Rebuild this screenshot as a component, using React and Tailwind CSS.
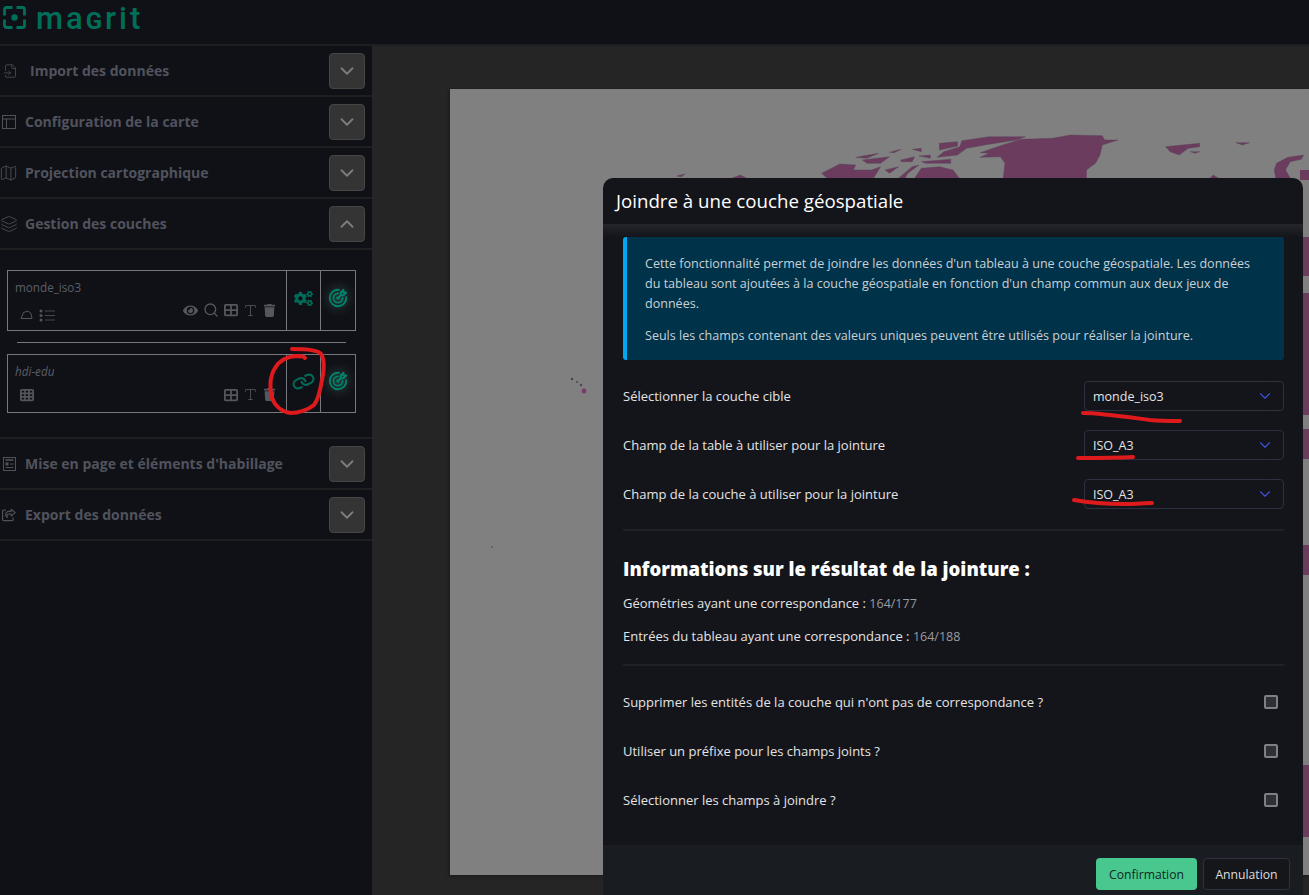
import { ChevronDown, ChevronUp, FileInput, Map as MapIcon, Layers, Search, Type, Link } from "lucide-react";
import { FaCogs, FaEye, FaTrash } from "react-icons/fa";
import { FaTableCells, FaTableCellsLarge, FaRegShareFromSquare } from "react-icons/fa6";
import { TbTargetArrow } from "react-icons/tb";

function SectionRow({ icon, label, open, labelClass = "ml-[7px]" }) {
  return (
    <div className="flex items-center h-[51px] border-b-2 border-[#1e1f21] pr-[7px]">
      <span className="w-[18px] flex justify-center text-[#50515a]">{icon}</span>
      <span className={"text-[14px] font-bold text-[#50535e] " + labelClass}>{label}</span>
      <button className="ml-auto w-[36px] h-[36px] rounded-[4px] bg-[#343434] border border-[#454545] flex items-center justify-center text-[#7d7d7d]">
        {open ? <ChevronUp size={22} strokeWidth={2} /> : <ChevronDown size={22} strokeWidth={2} />}
      </button>
    </div>
  );
}

function LayerCard({ name, italic, h, typeIcons, tools, action, rowClass, toolsClass }) {
  return (
    <div className={"flex mx-[7px] w-[349px] border border-[#77787c] " + h}>
      <div className="flex-1 min-w-0 flex flex-col justify-between pl-[7px] pr-[10px] pt-[8px]">
        <div className={"text-[11.7px] text-[#5b5e68] " + (italic ? "italic" : "")}>{name}</div>
        <div className={"flex items-center justify-between " + rowClass}>
          <div className="flex items-center gap-[6px] pl-[5px] text-[#54565e]">{typeIcons}</div>
          <div className={"flex items-center gap-[5px] text-[#55575f] " + toolsClass}>{tools}</div>
        </div>
      </div>
      <div className="w-[34px] pb-[5px] border-l border-[#77787c] flex items-center justify-center text-[#006b58]">{action}</div>
      <div className="w-[35px] pb-[5px] border-l border-[#77787c] flex items-center justify-center text-[#00836a]">
        <TbTargetArrow size={22} className="drop-shadow-[0_0_6px_rgba(120,200,180,0.45)]" />
      </div>
    </div>
  );
}

function Sidebar() {
  return (
    <aside className="w-[372px] shrink-0 bg-[#101116]">
      <SectionRow icon={<FileInput size={20} strokeWidth={1.2} className="ml-[3px]" />} label="Import des données" labelClass="ml-[12px]" />
      <SectionRow
        icon={
          <svg width="14" height="14" viewBox="0 0 14 14" fill="none" stroke="currentColor" strokeWidth="1" className="-ml-[1px]">
            <rect x="0.5" y="0.5" width="13" height="13" />
            <path d="M0.5 4H13.5M4.5 4V13.5" />
          </svg>
        }
        label="Configuration de la carte"
      />
      <SectionRow icon={<MapIcon size={20} strokeWidth={1.1} className="-ml-[1px]" />} label="Projection cartographique" />
      <SectionRow icon={<Layers size={18} strokeWidth={1.1} className="-ml-[1px]" />} label="Gestion des couches" open />
      <div className="h-[189px] border-b-2 border-[#1e1f21] pt-[20px]">
        <LayerCard
          name="monde_iso3"
          h="h-[61px]"
          rowClass="pb-[2px]"
          toolsClass="mb-[10px]"
          typeIcons={
            <>
              <svg width="13" height="10" viewBox="0 0 13 10" fill="none" stroke="currentColor" strokeWidth="1">
                <path d="M1 8.5 L3.5 2.5 L8 1 L11 3.5 L12 8.5 Z" />
              </svg>
              <svg width="16" height="13" viewBox="0 0 16 13" fill="none" stroke="currentColor" strokeWidth="0.8">
                <path d="M6 2H16M6 6.5H16M6 11H16" />
                <circle cx="2" cy="2" r="1.5" fill="currentColor" stroke="none" />
                <circle cx="2" cy="6.5" r="1.5" fill="currentColor" stroke="none" />
                <circle cx="2" cy="11" r="1.5" fill="currentColor" stroke="none" />
              </svg>
            </>
          }
          tools={
            <>
              <FaEye size={15} />
              <Search size={16} strokeWidth={2} />
              <FaTableCellsLarge size={14} />
              <Type size={15} strokeWidth={1.3} />
              <FaTrash size={13} />
            </>
          }
          action={<FaCogs size={19} />}
        />
        <div className="h-px bg-[#77787c] ml-[17px] w-[329px] my-[11px]" />
        <LayerCard
          name="hdi-edu"
          italic
          h="h-[59px]"
          rowClass="pb-[10px]"
          toolsClass=""
          typeIcons={<FaTableCells size={14} />}
          tools={
            <>
              <FaTableCellsLarge size={14} />
              <Type size={15} strokeWidth={1.3} />
              <FaTrash size={13} />
            </>
          }
          action={<Link size={21} strokeWidth={2.4} className="rotate-[20deg]" />}
        />
      </div>
      <SectionRow
        icon={
          <svg width="13" height="14" viewBox="0 0 13 14" fill="none" stroke="currentColor" strokeWidth="1">
            <rect x="0.5" y="0.5" width="12" height="13" />
            <path d="M2.5 3H10.5" strokeWidth="1.6" />
            <rect x="2.5" y="5.5" width="3" height="3" fill="currentColor" stroke="none" />
            <path d="M7 7H10.5M2.5 10.5H10.5" />
          </svg>
        }
        label="Mise en page et éléments d'habillage"
      />
      <SectionRow icon={<FaRegShareFromSquare size={14} />} label="Export des données" />
    </aside>
  );
}

// carte en fond, coordonnees page
function WorldMap() {
  const north = [
    "840,98 890,75 930,58 1000,55 1040,45 1110,47 1115,60 1145,60 1110,75 1105,105 1095,130 1075,150 1075,185 890,185 895,130 885,110 840,112 860,100",
    "800,62 860,50 940,50 920,60 850,75 810,85 790,105 745,112 760,95 795,80",
    "750,70 790,65 790,78 750,90",
    "490,160 530,132 565,135 560,150 600,150 620,140 600,185 510,185",
    "650,185 690,140 705,135 680,160 670,185",
    "690,185 710,145 750,140 780,150 800,185",
    "565,112 615,100 590,115",
    "580,120 640,110 620,130 590,130",
    "665,120 695,110 690,125 665,125",
    "710,125 775,118 775,130 720,130",
    "640,97 665,88 650,98",
    "690,88 710,85 710,95",
    "705,108 730,105 730,115",
    "630,150 660,140 640,160",
    "1250,80 1325,70 1325,80 1300,85 1280,105 1260,95",
    "1405,68 1435,68 1420,75",
    "1305,95 1325,95 1315,100",
    "1495,130 1520,112 1555,105 1550,118 1525,125 1515,150 1530,185 1495,185 1490,150",
    "1340,185 1355,165 1380,185",
    "170,168 188,162 180,170",
    "270,185 310,165 340,185",
  ];
  const strip = [
    [170, 180],
    [237, 276],
    [293, 415],
    [429, 459],
    [545, 575],
    [765, 837],
  ];
  return (
    <svg viewBox="450 89 859 786" className="w-[859px] h-[786px] block">
      <g transform="translate(600 120) scale(0.4525 0.3333)" fill="#6b3c5e" stroke="#55405a" strokeWidth="1" strokeLinejoin="round">
        {north.map((p) => (
          <polygon key={p} points={p} />
        ))}
      </g>
      {strip.map(([a, b]) => (
        <rect key={a} x="1300" y={a} width="9" height={b - a} fill="#6b3c5e" />
      ))}
      <circle cx="572" cy="379" r="1.2" fill="#444" />
      <circle cx="577" cy="382" r="1" fill="#55405a" />
      <circle cx="581" cy="385" r="1.2" fill="#55405a" />
      <circle cx="584" cy="391" r="2.4" fill="#7b3a6b" />
      <circle cx="492" cy="547" r="0.8" fill="#444" />
    </svg>
  );
}

function SelectRow({ label, value, className }) {
  return (
    <div className={"flex items-center justify-between h-[30px] " + className}>
      <span className="text-[13px] text-[#e4e4e6] pt-[2px]">{label}</span>
      <div className="w-[200px] h-[30px] border border-[#2e3040] rounded-[4px] flex items-center justify-between pl-[8px] pr-[9px]">
        <span className="text-[12.5px] text-[#e4e4e6] pt-[2px]">{value}</span>
        <ChevronDown size={18} strokeWidth={1.5} className="text-[#3e50d8]" />
      </div>
    </div>
  );
}

function CheckRow({ label }) {
  return (
    <div className="flex items-center justify-between h-[49px] pr-[6px]">
      <span className="text-[13px] text-[#e4e4e6]">{label}</span>
      <span className="w-[14px] h-[14px] mb-[2px] border-2 border-[#7f7f88] bg-[#2f2f38] rounded-[2px]" />
    </div>
  );
}

function Modal() {
  return (
    <div className="absolute left-[603px] top-[178px] bottom-0 w-[700px] rounded-t-[10px] bg-[#14151a] flex flex-col">
      <div className="h-[46px] shrink-0 flex items-center px-[13px] text-[18.7px] text-white">Joindre à une couche géospatiale</div>
      <div className="flex-1 bg-gradient-to-b from-[#24262b] to-[#14151a] to-[13px] px-[20px] pt-[13px]">
        <div className="w-[661px] h-[123px] bg-[#00334a] border-l-4 border-[#00a8f0] rounded-[3px] pl-[18px] pr-[30px] pt-[17px] text-[12.55px] leading-[20px] text-[#c9d1d6]">
          <p>
            Cette fonctionnalité permet de joindre les données d'un tableau à une couche géospatiale. Les données du tableau sont ajoutées à la couche géospatiale en fonction d'un champ commun aux deux jeux de données.
          </p>
          <p className="mt-[12px]">Seuls les champs contenant des valeurs uniques peuvent être utilisés pour réaliser la jointure.</p>
        </div>
        <div className="w-[661px]">
          <SelectRow className="mt-[21px]" label="Sélectionner la couche cible" value="monde_iso3" />
          <SelectRow className="mt-[19px]" label="Champ de la table à utiliser pour la jointure" value="ISO_A3" />
          <SelectRow className="mt-[19px]" label="Champ de la couche à utiliser pour la jointure" value="ISO_A3" />
          <div className="h-[2px] bg-[#1f2128] mt-[20px]" />
          <h2 className="mt-[24px] text-[18.5px] font-extrabold leading-[27px] text-white">Informations sur le résultat de la jointure :</h2>
          <p className="mt-[11px] text-[13px] leading-[20px] text-[#e4e4e6]">
            Géométries ayant une correspondance : <span className="text-[12.5px] text-[#9a9ba0]">164/177</span>
          </p>
          <p className="mt-[12px] text-[13px] leading-[20px] text-[#e4e4e6]">
            Entrées du tableau ayant une correspondance : <span className="text-[12.5px] text-[#9a9ba0]">164/188</span>
          </p>
          <div className="h-[2px] bg-[#1f2128] mt-[17px] mb-[12px]" />
          <CheckRow label="Supprimer les entités de la couche qui n'ont pas de correspondance ?" />
          <CheckRow label="Utiliser un préfixe pour les champs joints ?" />
          <CheckRow label="Sélectionner les champs à joindre ?" />
        </div>
      </div>
      <div className="h-[50px] shrink-0 bg-[#191c21] flex items-start justify-end gap-[6px] pt-[13px] pr-[13px]">
        <button className="w-[101px] h-[32px] pt-[2px] rounded-[4px] bg-[#48c78e] text-[12.2px] text-[#12291f]">Confirmation</button>
        <button className="w-[87px] h-[32px] pt-[2px] rounded-[4px] bg-[#14161a] border border-[#2e3040] text-[12.2px] text-[#dedede]">Annulation</button>
      </div>
    </div>
  );
}

// annotations au feutre rouge
function RedMarks() {
  return (
    <svg viewBox="0 0 1309 895" className="absolute inset-0 w-full h-full pointer-events-none" fill="none" stroke="#de1a1d" strokeWidth="4" strokeLinecap="round" strokeLinejoin="round">
      <path d="M292 349 C305 349 318 350 321 354 C325 360 324 372 322 380 C320 392 318 400 314 405 C308 410 298 413 291 413 C282 412 275 406 272 398 C269 388 270 376 275 368 C279 361 286 357 295 356 C300 356 304 356 305 358" />
      <path d="M1083 413 C1100 413 1120 416 1150 420 C1160 421 1170 421 1180 421" />
      <path d="M1078 458 C1095 458 1115 458 1133 457" />
      <path d="M1074 500 C1085 502 1105 504 1125 504 C1135 504 1145 503 1152 503" />
    </svg>
  );
}

export default function App() {
  return (
    <div className="relative w-[1309px] h-[895px] overflow-hidden bg-[#252525] font-['Open_Sans',sans-serif]">
      <header className="h-[46px] bg-[#101116] flex items-start pl-[3px] pt-[4px] border-b-2 border-[#1e1f21]">
        <svg width="23" height="23" viewBox="0 0 23 23" fill="none" stroke="#006f5a" strokeWidth="2.8" className="mt-[2px]">
          <path d="M9.5 1.5H3.5A2 2 0 0 0 1.5 3.5V9.5M13.5 1.5H19.5A2 2 0 0 1 21.5 3.5V9.5M9.5 21.5H3.5A2 2 0 0 1 1.5 19.5V13.5M13.5 21.5H19.5A2 2 0 0 0 21.5 19.5V13.5" />
          <circle cx="11.5" cy="11.5" r="3.2" fill="#006f5a" stroke="none" />
        </svg>
        <span className="ml-[10px] text-[31px] leading-[30px] font-medium tracking-[3px] font-['Roboto',sans-serif] text-[#006f5a]">
          ma<span className="text-[24px] font-bold">G</span>rit
        </span>
      </header>
      <div className="flex h-[849px]">
        <Sidebar />
        <main className="flex-1 pl-[78px] pt-[43px] min-w-0">
          <div className="bg-[#808080] w-[859px] h-[786px] shadow-[-1px_1px_3px_rgba(0,0,0,0.35)]">
            <WorldMap />
          </div>
        </main>
      </div>
      <Modal />
      <RedMarks />
    </div>
  );
}
